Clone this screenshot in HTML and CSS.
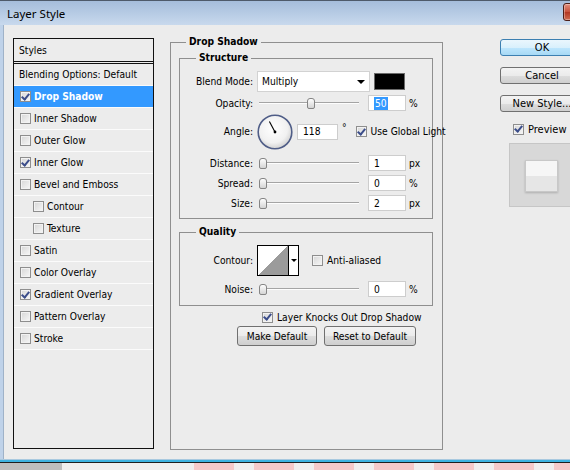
FILE: index.html
```html
<!DOCTYPE html>
<html lang="en">
  <head>
    <meta charset="UTF-8" />
    <title>Layer Style</title>
    <link rel="stylesheet" href="styles.css">
  </head>
  <body>
    <div class="window">
      <header class="titlebar">
        <span class="title">Layer Style</span>
        <span class="close-btn"></span>
      </header>

      <div class="dialog">
        <!-- effects list -->
        <ul class="styles-list">
          <li class="list-head">Styles</li>
          <li class="item plain">Blending Options: Default</li>
          <li class="item selected"><span class="cb checked"></span>Drop Shadow</li>
          <li class="item"><span class="cb"></span>Inner Shadow</li>
          <li class="item"><span class="cb"></span>Outer Glow</li>
          <li class="item"><span class="cb checked"></span>Inner Glow</li>
          <li class="item"><span class="cb"></span>Bevel and Emboss</li>
          <li class="item sub-item"><span class="cb"></span>Contour</li>
          <li class="item sub-item"><span class="cb"></span>Texture</li>
          <li class="item"><span class="cb"></span>Satin</li>
          <li class="item"><span class="cb"></span>Color Overlay</li>
          <li class="item"><span class="cb checked"></span>Gradient Overlay</li>
          <li class="item"><span class="cb"></span>Pattern Overlay</li>
          <li class="item"><span class="cb"></span>Stroke</li>
        </ul>

        <!-- drop shadow settings -->
        <fieldset class="group main-group">
          <legend>Drop Shadow</legend>

          <fieldset class="group structure">
            <legend>Structure</legend>
            <div class="row row-blend">
              <label>Blend Mode:</label>
              <div class="select">Multiply<span class="arrow"></span></div>
              <span class="swatch"></span>
            </div>
            <div class="row row-opacity">
              <label>Opacity:</label>
              <div class="slider"><span class="thumb" style="margin-left:50px"></span></div>
              <span class="field"><span class="selection">50</span></span>
              <span class="unit">%</span>
            </div>
            <div class="row row-angle">
              <label>Angle:</label>
              <svg class="dial" width="36" height="36" viewBox="0 0 36 36">
                <defs>
                  <radialGradient id="dialFill" cx="45%" cy="40%" r="60%">
                    <stop offset="0" stop-color="#ffffff" />
                    <stop offset="0.7" stop-color="#f1f1f1" />
                    <stop offset="1" stop-color="#d2d2d2" />
                  </radialGradient>
                </defs>
                <circle cx="18" cy="18" r="16.8" fill="url(#dialFill)" stroke="#4f5d87" stroke-width="1.6" />
                <line x1="18" y1="18" x2="12.4" y2="7.4" stroke="#000" stroke-width="1.1" />
                <circle cx="18" cy="18" r="1.4" fill="#000" />
              </svg>
              <span class="field angle-field">118</span>
              <span class="degree">°</span>
              <span class="cb checked global-cb"></span>
              <span class="cb-label">Use Global Light</span>
            </div>
            <div class="row row-distance">
              <label>Distance:</label>
              <div class="slider"><span class="thumb" style="margin-left:2px"></span></div>
              <span class="field">1</span>
              <span class="unit">px</span>
            </div>
            <div class="row row-spread">
              <label>Spread:</label>
              <div class="slider"><span class="thumb" style="margin-left:2px"></span></div>
              <span class="field">0</span>
              <span class="unit">%</span>
            </div>
            <div class="row row-size">
              <label>Size:</label>
              <div class="slider"><span class="thumb" style="margin-left:2px"></span></div>
              <span class="field">2</span>
              <span class="unit">px</span>
            </div>
          </fieldset>

          <fieldset class="group quality">
            <legend>Quality</legend>
            <div class="row row-contour">
              <label>Contour:</label>
              <div class="contour">
                <span class="contour-preview"></span>
                <span class="contour-drop"><span class="arrow small"></span></span>
              </div>
              <span class="cb aa-cb"></span>
              <span class="cb-label">Anti-aliased</span>
            </div>
            <div class="row row-noise">
              <label>Noise:</label>
              <div class="slider"><span class="thumb" style="margin-left:2px"></span></div>
              <span class="field">0</span>
              <span class="unit">%</span>
            </div>
          </fieldset>

          <div class="row knock-row">
            <span class="cb checked"></span>
            <span class="cb-label">Layer Knocks Out Drop Shadow</span>
          </div>
          <div class="row default-row">
            <button class="btn make-default">Make Default</button>
            <button class="btn reset-default">Reset to Default</button>
          </div>
        </fieldset>

        <!-- dialog buttons + preview -->
        <div class="side">
          <button class="btn btn-ok">OK</button>
          <button class="btn">Cancel</button>
          <button class="btn">New Style...</button>
          <div class="row preview-row">
            <span class="cb checked"></span>
            <span class="cb-label">Preview</span>
          </div>
          <div class="preview-box">
            <div class="preview-swatch"></div>
          </div>
        </div>
      </div>

      <div class="frame-bottom"></div>
      <div class="canvas-strip"></div>
    </div>
  </body>
</html>
```

FILE: styles.css
```css
* {
  box-sizing: border-box;
}
body {
  margin: 0;
  width: 570px;
  height: 470px;
  overflow: hidden;
  background: #bebebe;
  font-family: "DejaVu Sans Condensed", "DejaVu Sans", sans-serif;
  font-size: 10.2px;
  color: #000;
}
.window {
  width: 620px;
}

/* title bar */
.titlebar {
  height: 25px;
  display: flex;
  align-items: center;
  padding-left: 7px;
  border-top: 1px solid #4e5a6a;
  background: linear-gradient(#a5bddb, #c8d9ed);
}
.title {
  font-family: "Noto Sans", sans-serif;
  font-size: 11.5px;
}
.close-btn {
  width: 43px;
  height: 18px;
  margin: -3px 14px 0 auto;
  border: 1px solid #4d1f18;
  border-radius: 3px;
  background: linear-gradient(#e3907f, #c6503a 50%, #b23621 51%, #cf6b4f);
  box-shadow: inset 0 0 0 1px rgba(255, 255, 255, 0.35);
}

/* dialog body */
.dialog {
  height: 434px;
  display: flex;
  align-items: flex-start;
  padding: 10px 0 0 10px;
  background: #ececec;
  border-left: 3px solid #bfd2e9;
  box-shadow: inset 1px 0 0 #9fb2c8;
}
.frame-bottom {
  height: 4px;
  border-top: 1px solid #a9c9df;
  border-bottom: 1px solid #1f1f1f;
  background: #3eb2e0;
}
.canvas-strip {
  height: 7px;
  background:
    linear-gradient(90deg, #bebebe 0 62px, transparent 62px),
    linear-gradient(90deg, transparent 62px, #f0eeee 62px 194px, transparent 194px),
    repeating-linear-gradient(90deg, #f1eeee 0 14px, #f6c9c9 14px 54px, #f1eeee 54px 60px);
}

/* styles list */
.styles-list {
  list-style: none;
  margin: 3px 0 0;
  padding: 0;
  width: 141px;
  height: 411px;
  border: 1px solid #111;
  flex-shrink: 0;
}
.list-head {
  height: 25px;
  display: flex;
  align-items: center;
  padding-left: 5px;
  border-bottom: 3px double #111;
}
.item {
  height: 22px;
  display: flex;
  align-items: center;
  padding-left: 6px;
  border-bottom: 1px solid #fbfbfb;
}
.item.plain {
  padding-left: 5px;
}
.item.sub-item {
  padding-left: 19px;
}
.item.selected {
  background: #3399ff;
  color: #fff;
  font-weight: bold;
}

/* checkbox */
.cb {
  width: 11px;
  height: 11px;
  margin-right: 3px;
  flex-shrink: 0;
  display: inline-flex;
  align-items: center;
  justify-content: center;
  border: 1px solid #8e8e8e;
  background: linear-gradient(135deg, #d6d6d6, #f7f7f7);
  box-shadow: inset 0 0 0 1px #f2f2f2;
}
.cb.checked::after {
  content: "";
  width: 3px;
  height: 6px;
  margin-top: -2px;
  border: solid #3b4d8a;
  border-width: 0 2px 2px 0;
  transform: rotate(40deg);
}

/* group boxes */
.group {
  margin: 0;
  min-width: 0;
  border: 1px solid #8f8f8f;
}
.group legend {
  font-weight: bold;
  line-height: 14px;
  padding: 0 3px;
  margin-left: 16px;
}
.main-group {
  width: 273px;
  height: 415px;
  margin-left: 16px;
  padding: 0 8px;
  flex-shrink: 0;
}
.main-group > legend {
  margin-left: 7px;
}
.structure {
  width: 254px;
  margin-top: 2px;
  padding: 6px 0 7px;
}
.quality {
  width: 254px;
  margin-top: 6px;
  padding: 6px 0 8px;
}

.row {
  display: flex;
  align-items: center;
}
.row label {
  width: 73px;
  margin-right: 4px;
  text-align: right;
  flex-shrink: 0;
}
.row-blend {
  height: 21px;
}
.row-opacity {
  height: 16px;
  margin-top: 3px;
}
.row-angle {
  height: 35px;
  margin-top: 3px;
}
.row-distance {
  height: 16px;
  margin-top: 6px;
}
.row-spread,
.row-size {
  height: 16px;
  margin-top: 4px;
}
.row-contour {
  height: 31px;
}
.row-noise {
  height: 16px;
  margin-top: 5px;
}

.select {
  width: 113px;
  height: 21px;
  display: flex;
  align-items: center;
  justify-content: space-between;
  padding: 0 4px 0 4px;
  background: #fff;
  border: 1px solid #d2d2d2;
}
.arrow {
  width: 0;
  height: 0;
  border-left: 4px solid transparent;
  border-right: 4px solid transparent;
  border-top: 4px solid #000;
}
.arrow.small {
  border-left-width: 3px;
  border-right-width: 3px;
  border-top-width: 3px;
}
.swatch {
  width: 31px;
  height: 17px;
  margin-left: 4px;
  background: #000;
  border: 1px solid #6a6a6a;
}

.slider {
  width: 104px;
  height: 16px;
  display: flex;
  align-items: center;
  flex-shrink: 0;
  background:
    linear-gradient(#a4a4a4, #a4a4a4) 2px 7px / 100px 1px no-repeat,
    linear-gradient(#fdfdfd, #fdfdfd) 2px 8px / 100px 1px no-repeat;
}
.thumb {
  width: 8px;
  height: 11px;
  border: 1px solid #858585;
  border-radius: 3px 3px 2px 2px;
  background: linear-gradient(#fdfdfd, #d5d5d5);
}
.field {
  width: 38px;
  height: 16px;
  margin-left: 7px;
  padding-left: 5px;
  display: flex;
  align-items: center;
  flex-shrink: 0;
  background: #fff;
  border: 1px solid #cdcdcd;
}
.selection {
  background: #3399ff;
  color: #fff;
  padding: 0 1px;
  line-height: 13px;
}
.unit {
  margin-left: 3px;
}

.dial {
  flex-shrink: 0;
  margin-top: 1px;
}
.angle-field {
  width: 41px;
  margin-left: 4px;
}
.degree {
  margin-left: 4px;
  align-self: flex-start;
  margin-top: 8px;
}
.global-cb {
  margin-left: 9px;
}
.cb-label {
  margin-left: 1px;
  white-space: nowrap;
}

.contour {
  width: 42px;
  height: 31px;
  display: flex;
  border: 1px solid #000;
  flex-shrink: 0;
}
.contour-preview {
  width: 31px;
  border-right: 1px solid #000;
  background: linear-gradient(to bottom right, #fff 50%, #9b9b9b 50%);
}
.contour-drop {
  flex: 1;
  display: flex;
  align-items: center;
  justify-content: center;
  background: #fff;
}
.aa-cb {
  margin-left: 13px;
}

.knock-row {
  height: 14px;
  margin: 4px 0 0 83px;
}
.default-row {
  margin: 2px 0 0 58px;
}
.btn {
  height: 20px;
  padding: 0;
  font: inherit;
  color: #000;
  border: 1px solid #707070;
  border-radius: 3px;
  background: linear-gradient(#f3f3f3, #ebebeb 50%, #dddddd 51%, #cfcfcf);
}
.make-default {
  width: 80px;
}
.reset-default {
  width: 92px;
  margin-left: 7px;
}

/* right column */
.side {
  width: 84px;
  margin: 4px 0 0 57px;
  display: flex;
  flex-direction: column;
  flex-shrink: 0;
}
.side .btn {
  height: 17px;
  font-size: 11px;
  white-space: nowrap;
}
.side .btn + .btn {
  margin-top: 11px;
}
.side .btn-ok {
  border-color: #3c7fb1;
  background: linear-gradient(#eaf6fd, #d9f0fc 50%, #bee6fd 51%, #a7d9f5);
}
.preview-row {
  height: 14px;
  margin: 10px 0 0 13px;
  font-size: 11px;
}
.preview-box {
  width: 66px;
  height: 64px;
  margin: 7px 0 0 9px;
  padding: 16px 0 0 15px;
  background: #d8d8d8;
  border: 1px solid #c6c6c6;
}
.preview-swatch {
  width: 33px;
  height: 32px;
  border: 1px solid #c8c8c8;
  background: linear-gradient(#f6f6f6 0 50%, #e6e6e6 50%);
  box-shadow: 0 1px 2px rgba(0, 0, 0, 0.2);
}
```
